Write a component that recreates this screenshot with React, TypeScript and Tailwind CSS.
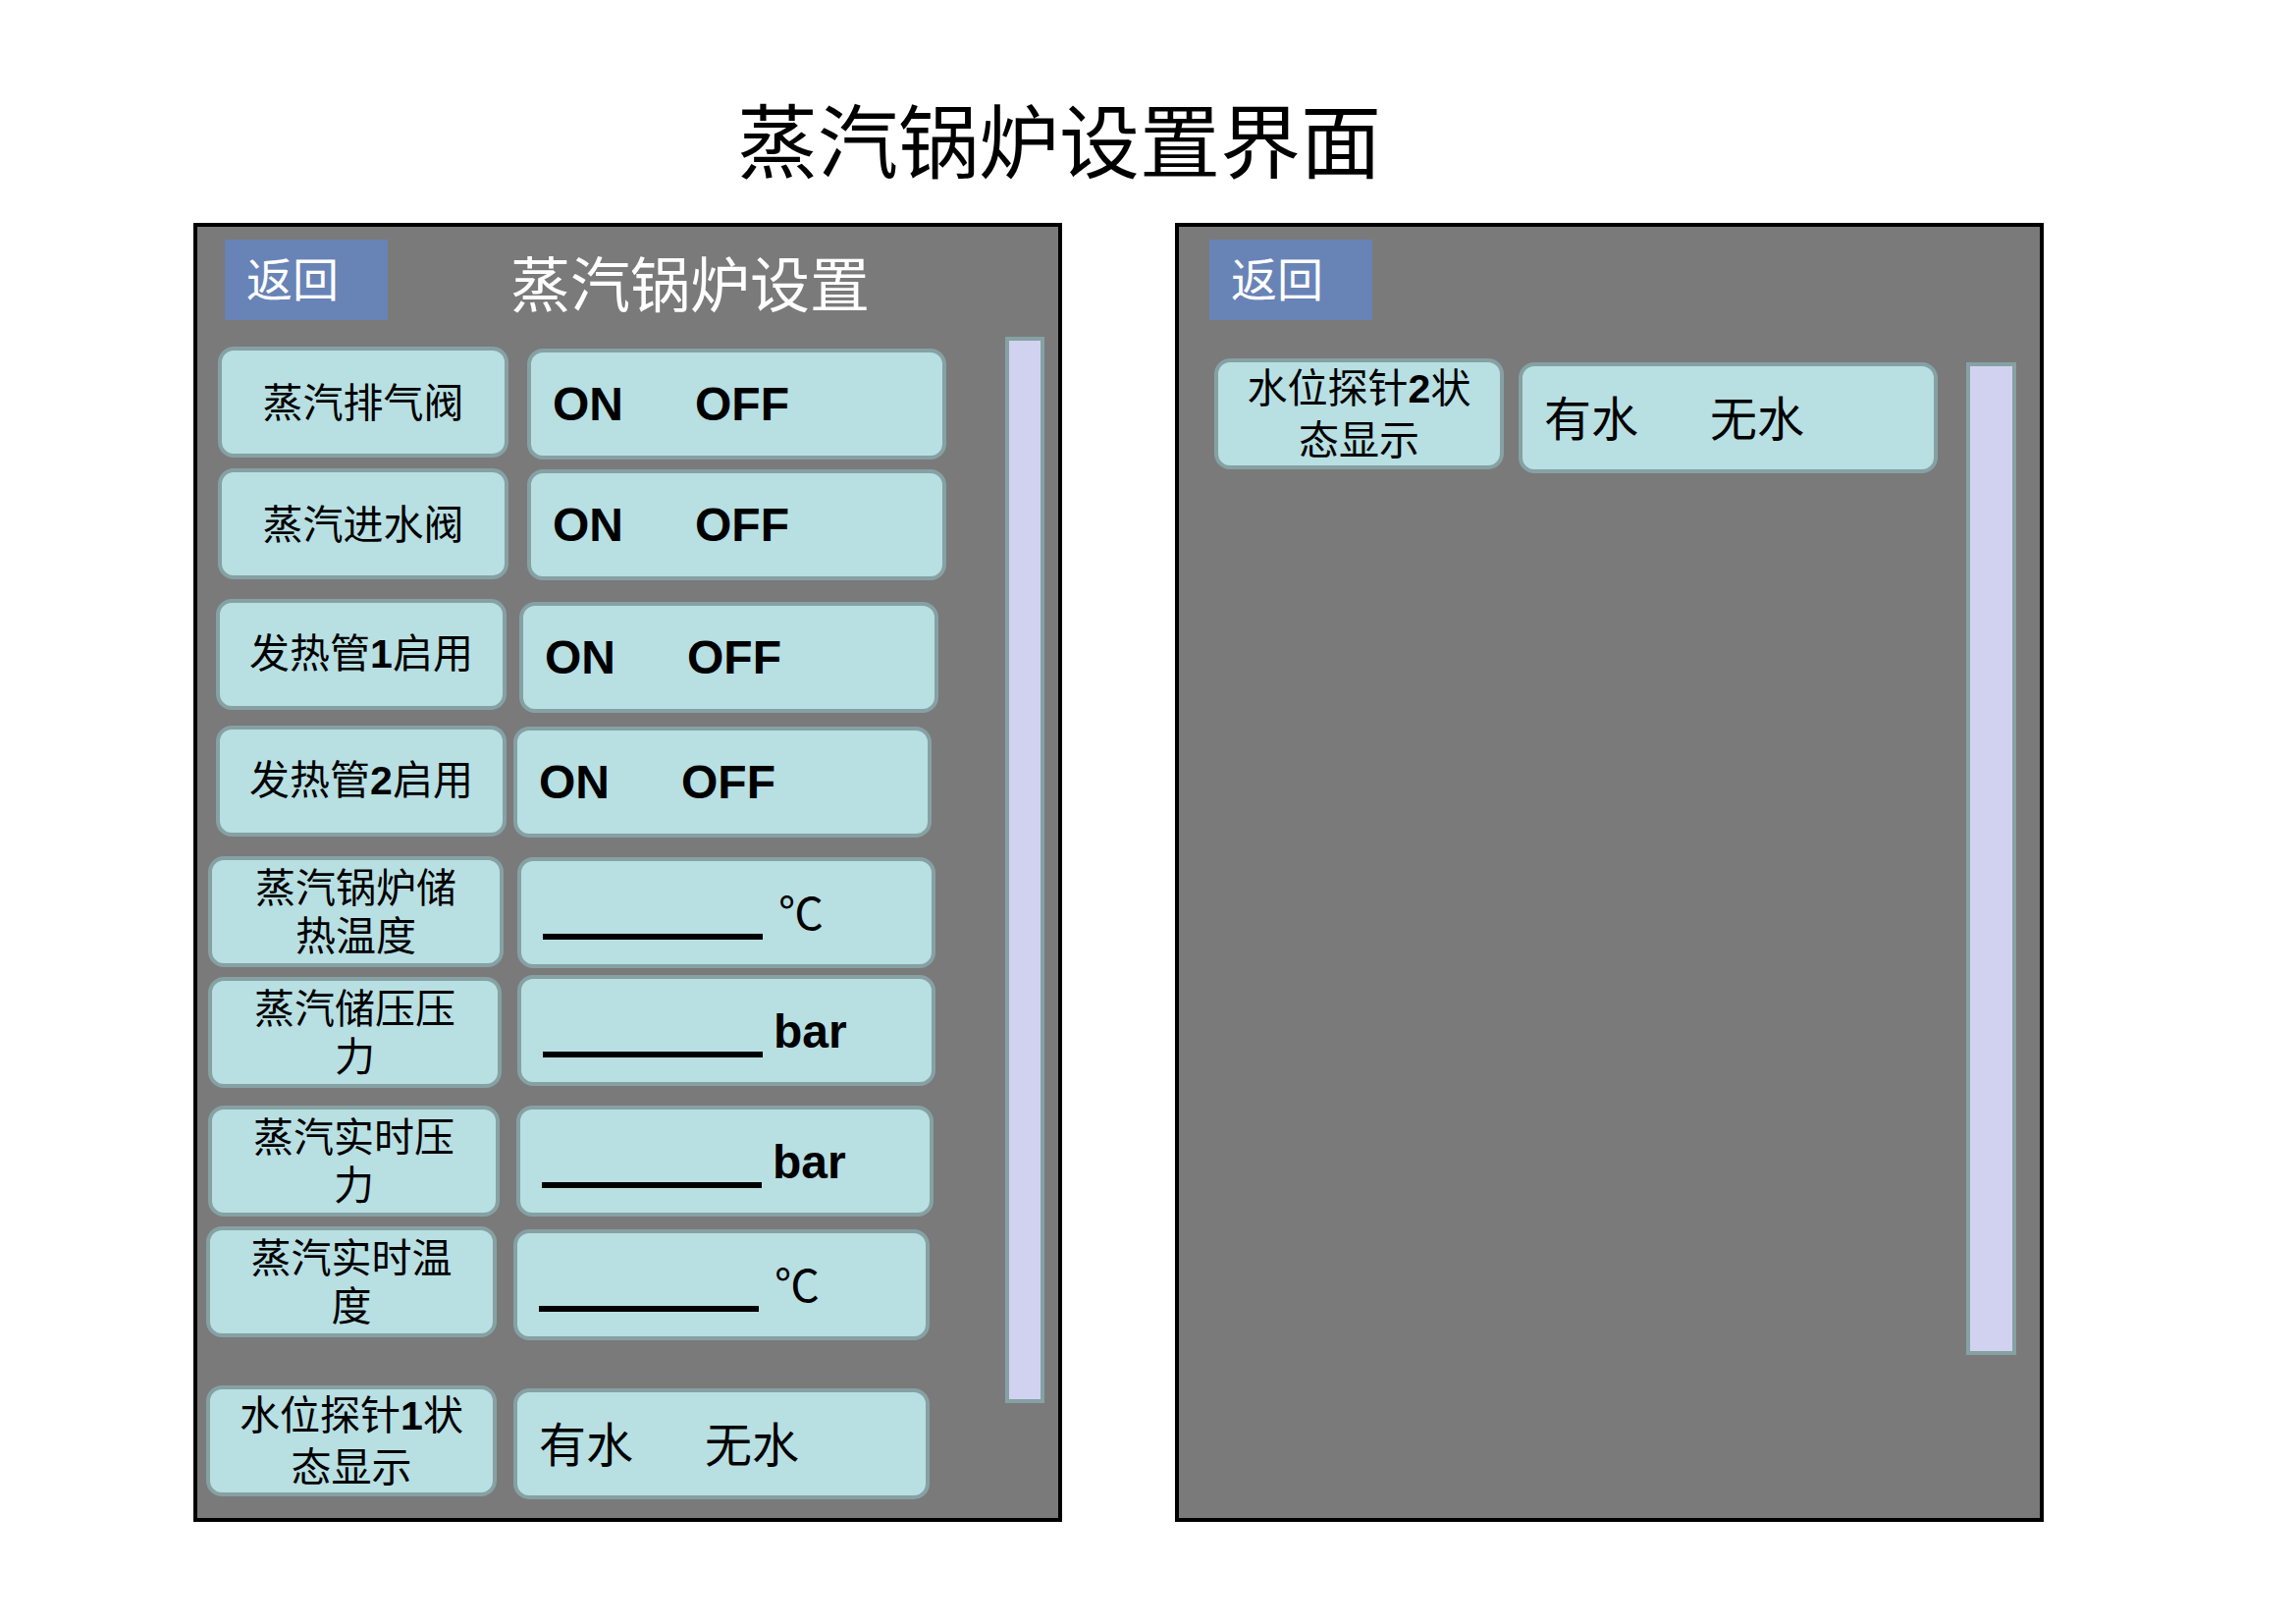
import React from "react";

const cjk = "font-['Noto_Sans_CJK_SC','Noto_Sans_CJK_JP',sans-serif]";
const latin = "font-['Liberation_Sans',Arial,sans-serif] font-bold";
const box = "shrink-0 rounded-[16px] border-4 border-[#86a1a3] bg-[#b8dfe2]";

function Digit({ children }: { children: React.ReactNode }) {
  return <span className={latin}>{children}</span>;
}

function Label({ className, children }: { className: string; children: React.ReactNode }) {
  return (
    <div
      className={`${box} h-[113px] flex flex-col items-center justify-center pb-[5px] text-center text-[41px] leading-[49px] text-black ${cjk} ${className}`}
    >
      {children}
    </div>
  );
}

function OnOff({ className }: { className: string }) {
  return (
    <div className={`${box} h-[113px] flex items-center pl-[22px] text-[48px] leading-none text-black ${latin} ${className}`}>
      <span>ON</span>
      <span className="ml-[73px]">OFF</span>
    </div>
  );
}

function Measure({ className, unit }: { className: string; unit: "bar" | "c" }) {
  return (
    <div className={`${box} h-[113px] flex items-end pl-[22px] pb-[25px] text-black ${className}`}>
      <div className="w-[224px] h-[6px] bg-black" />
      {unit === "bar" ? (
        <span className={`ml-[11px] mb-[2px] text-[48px] leading-none ${latin}`}>bar</span>
      ) : (
        <span className={`ml-[16px] mb-[7px] text-[46px] leading-none ${cjk}`}>℃</span>
      )}
    </div>
  );
}

function Water({ className }: { className: string }) {
  return (
    <div className={`${box} h-[113px] flex items-center pl-[22px] pb-[5px] text-[48px] leading-none text-black ${cjk} ${className}`}>
      <span>有水</span>
      <span className="ml-[73px]">无水</span>
    </div>
  );
}

function BackButton() {
  return (
    <div className={`w-[166px] h-[82px] shrink-0 bg-[#6883b6] flex items-center pl-[22px] pb-[8px] text-white text-[47px] leading-none ${cjk}`}>
      返回
    </div>
  );
}

function Scrollbar({ className }: { className: string }) {
  return <div className={`shrink-0 border-4 border-[#86a1a3] bg-[#d1d2f0] ${className}`} />;
}

export default function App() {
  return (
    <div className="w-[2339px] h-[1654px] bg-white overflow-hidden">
      <div className={`pt-[99px] pl-[751px] text-[82px] leading-none text-black ${cjk}`}>蒸汽锅炉设置界面</div>

      <div className="flex mt-[46px] pl-[197px] gap-[115px]">
        {/* Left panel */}
        <div className="w-[885px] h-[1323px] border-4 border-black bg-[#7a7a7a] flex flex-col">
          <div className="flex items-start pt-[13px] pl-[28px]">
            <BackButton />
            <div className={`ml-[125px] mt-[12px] text-white text-[61px] leading-none ${cjk}`}>蒸汽锅炉设置</div>
          </div>
          <div className="flex items-start">
            <div className="flex flex-col">
              <div className="flex items-start h-[113px] mt-[27px] ml-[21px]">
                <Label className="w-[296px]">蒸汽排气阀</Label>
                <OnOff className="ml-[19px] mt-[2px] w-[427px]" />
              </div>
              <div className="flex items-start h-[113px] mt-[11px] ml-[21px]">
                <Label className="w-[296px]">蒸汽进水阀</Label>
                <OnOff className="ml-[19px] mt-[1px] w-[427px]" />
              </div>
              <div className="flex items-start h-[113px] mt-[20px] ml-[19px]">
                <Label className="w-[296px]">
                  <span>
                    发热管<Digit>1</Digit>启用
                  </span>
                </Label>
                <OnOff className="ml-[13px] mt-[3px] w-[427px]" />
              </div>
              <div className="flex items-start h-[113px] mt-[16px] ml-[19px]">
                <Label className="w-[296px]">
                  <span>
                    发热管<Digit>2</Digit>启用
                  </span>
                </Label>
                <OnOff className="ml-[7px] mt-[1px] w-[426px]" />
              </div>
              <div className="flex items-start h-[113px] mt-[20px] ml-[11px]">
                <Label className="w-[301px]">
                  <span>蒸汽锅炉储</span>
                  <span>热温度</span>
                </Label>
                <Measure className="ml-[14px] mt-[1px] w-[426px]" unit="c" />
              </div>
              <div className="flex items-start h-[113px] mt-[10px] ml-[11px]">
                <Label className="w-[299px]">
                  <span>蒸汽储压压</span>
                  <span>力</span>
                </Label>
                <Measure className="ml-[16px] -mt-[2px] w-[426px]" unit="bar" />
              </div>
              <div className="flex items-start h-[113px] mt-[18px] ml-[11px]">
                <Label className="w-[297px]">
                  <span>蒸汽实时压</span>
                  <span>力</span>
                </Label>
                <Measure className="ml-[17px] mt-[0px] w-[425px]" unit="bar" />
              </div>
              <div className="flex items-start h-[113px] mt-[10px] ml-[9px]">
                <Label className="w-[296px]">
                  <span>蒸汽实时温</span>
                  <span>度</span>
                </Label>
                <Measure className="ml-[17px] mt-[3px] w-[424px]" unit="c" />
              </div>
              <div className="flex items-start h-[113px] mt-[49px] ml-[9px]">
                <Label className="w-[296px]">
                  <span>
                    水位探针<Digit>1</Digit>状
                  </span>
                  <span>态显示</span>
                </Label>
                <Water className="ml-[17px] mt-[3px] w-[424px]" />
              </div>
            </div>
            <Scrollbar className="ml-auto mr-[14px] mt-[17px] w-[40px] h-[1086px]" />
          </div>
        </div>

        {/* Right panel */}
        <div className="w-[885px] h-[1323px] border-4 border-black bg-[#7a7a7a] flex flex-col">
          <div className="flex items-start pt-[13px] pl-[31px]">
            <BackButton />
          </div>
          <div className="flex items-start">
            <div className="flex items-start h-[113px] mt-[39px] ml-[36px]">
              <Label className="w-[295px]">
                <span>
                  水位探针<Digit>2</Digit>状
                </span>
                <span>态显示</span>
              </Label>
              <Water className="ml-[15px] mt-[4px] w-[427px]" />
            </div>
            <Scrollbar className="ml-auto mr-[24px] mt-[43px] w-[51px] h-[1011px]" />
          </div>
        </div>
      </div>
    </div>
  );
}
